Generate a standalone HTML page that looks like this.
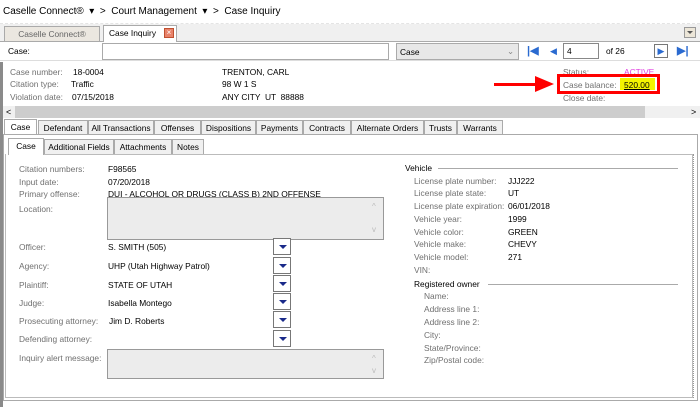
<!DOCTYPE html>
<html><head><style>
*{margin:0;padding:0;box-sizing:border-box}
body{width:700px;height:407px;background:#fff;font-family:"Liberation Sans",sans-serif;font-size:8.4px;color:#000;position:relative;overflow:hidden}
.a{position:absolute;white-space:nowrap}
.g{color:#707070}
.tab{position:absolute;border:1px solid #aaa;border-bottom:none;background:#f0f0f0;font-size:8.4px;padding-top:2px;text-align:center}
.dd{position:absolute;width:18px;height:17px;border:1px solid #777;background:#fff}
.dd:after{content:"";position:absolute;left:5px;top:6px;border-left:4px solid transparent;border-right:4px solid transparent;border-top:4px solid #1a2a8a}
.box{position:absolute;border:1px solid #999;background:#ececec}
</style></head><body>
<div class="a" style="left:0;top:0;width:700px;height:24px;background:#fff;border-bottom:1px dashed #e4e4e4"></div>
<div class="a" style="left:3px;top:6px;font-size:10px">Caselle Connect® &nbsp;▾ &nbsp;&gt; &nbsp;Court Management &nbsp;▾ &nbsp;&gt; &nbsp;Case Inquiry</div>
<div class="a" style="left:0;top:24px;width:700px;height:18px;background:#f0f0f0;border-bottom:1px solid #aaa"></div>
<div class="tab" style="left:4px;top:26px;width:96px;height:15px;color:#666;background:#ebe7e0">Caselle Connect®</div>
<div class="tab" style="left:103px;top:25px;width:74px;height:17px;background:#fff;text-align:left;padding-left:5px">Case Inquiry</div>
<div class="a" style="left:164px;top:28px;width:10px;height:10px;background:#e8826a;border:1px solid #c05030;color:#fff;font-size:8px;line-height:8px;text-align:center">×</div>
<div class="a" style="left:684px;top:27px;width:12px;height:11px;border:1px solid #999;background:#ece6d8"></div>
<div class="a" style="left:687px;top:31px;border-left:3px solid transparent;border-right:3px solid transparent;border-top:3px solid #555"></div>
<div class="a" style="left:0;top:42px;width:700px;height:19px;border-bottom:1px solid #ddd"></div>
<div class="a" style="left:8px;top:46px">Case:</div>
<div class="a" style="left:102px;top:43px;width:287px;height:17px;border:1px solid #aaa"></div>
<div class="a" style="left:396px;top:43px;width:123px;height:17px;border:1px solid #aaa;background:#e8e8e8;padding:3px 3px">Case<span style="position:absolute;right:4px;top:2px;color:#888">⌄</span></div>
<div class="a" style="left:527px;top:46px;color:#2a6ad0;font-size:11px;line-height:11px;font-weight:bold">|◀</div>
<div class="a" style="left:550px;top:46px;color:#2a6ad0;font-size:9px;line-height:11px">◀</div>
<div class="a" style="left:563px;top:43px;width:36px;height:16px;border:1px solid #888;padding:2px 3px">4</div>
<div class="a" style="left:606px;top:46px">of 26</div>
<div class="a" style="left:654px;top:44px;width:14px;height:14px;border:1px solid #777;color:#2a6ad0;font-size:9px;line-height:12px;text-align:center">▶</div>
<div class="a" style="left:677px;top:46px;color:#2a6ad0;font-size:11px;line-height:11px;font-weight:bold">▶|</div>
<div class="a" style="left:0;top:62px;width:3px;height:345px;background:#8a8a8a"></div>
<div class="a g" style="left:10px;top:67px">Case number:</div><div class="a" style="left:73px;top:67px">18-0004</div>
<div class="a g" style="left:10px;top:79px">Citation type:</div><div class="a" style="left:71px;top:79px">Traffic</div>
<div class="a g" style="left:10px;top:92px">Violation date:</div><div class="a" style="left:72px;top:92px">07/15/2018</div>
<div class="a" style="left:222px;top:67px">TRENTON, CARL</div>
<div class="a" style="left:222px;top:79px">98 W 1 S</div>
<div class="a" style="left:222px;top:92px">ANY CITY &nbsp;UT &nbsp;88888</div>
<div class="a g" style="left:563px;top:67px">Status:</div>
<div class="a" style="left:624px;top:67px;color:#e040e0">ACTIVE</div>
<div class="a g" style="left:563px;top:80px">Case balance:</div>
<div class="a" style="left:620px;top:78px;width:35px;height:12px;background:#f4f400"></div>
<div class="a" style="left:624px;top:80px;text-decoration:underline">520.00</div>
<div class="a g" style="left:563px;top:93px">Close date:</div>
<div class="a" style="left:557px;top:74px;width:103px;height:20px;border:3px solid #f00"></div>
<div class="a" style="left:494px;top:83px;width:45px;height:3px;background:#f00"></div>
<div class="a" style="left:535px;top:76px;border-top:8px solid transparent;border-bottom:8px solid transparent;border-left:19px solid #f00"></div>
<div class="a" style="left:3px;top:106px;width:697px;height:12px;background:#f0f0f0"></div>
<div class="a" style="left:15px;top:106px;width:280px;height:12px;background:#cdcdcd"></div>
<div class="a" style="left:295px;top:106px;width:350px;height:12px;background:#cdcdcd"></div>
<div class="a" style="left:6px;top:107px;font-size:9px">&lt;</div>
<div class="a" style="left:691px;top:107px;font-size:9px">&gt;</div>
<div class="tab" style="left:4px;top:119px;width:33px;height:16px;background:#fff;border-color:#aaa">Case</div>
<div class="tab" style="left:38px;top:120px;width:50px;height:14px">Defendant</div>
<div class="tab" style="left:88px;top:120px;width:66px;height:14px">All Transactions</div>
<div class="tab" style="left:154px;top:120px;width:47px;height:14px">Offenses</div>
<div class="tab" style="left:201px;top:120px;width:55px;height:14px">Dispositions</div>
<div class="tab" style="left:256px;top:120px;width:47px;height:14px">Payments</div>
<div class="tab" style="left:303px;top:120px;width:48px;height:14px">Contracts</div>
<div class="tab" style="left:351px;top:120px;width:73px;height:14px">Alternate Orders</div>
<div class="tab" style="left:424px;top:120px;width:33px;height:14px">Trusts</div>
<div class="tab" style="left:457px;top:120px;width:46px;height:14px">Warrants</div>
<div class="a" style="left:3px;top:134px;width:695px;height:267px;border:1px solid #aaa;border-top:1px solid #aaa"></div>
<div class="a" style="left:37px;top:134px;width:661px;height:1px;background:#aaa"></div>
<div class="tab" style="left:8px;top:138px;width:36px;height:17px;background:#fff">Case</div>
<div class="tab" style="left:44px;top:139px;width:70px;height:15px">Additional Fields</div>
<div class="tab" style="left:114px;top:139px;width:58px;height:15px">Attachments</div>
<div class="tab" style="left:172px;top:139px;width:32px;height:15px">Notes</div>
<div class="a" style="left:5px;top:154px;width:688px;height:244px;border:1px solid #bbb;border-top:none"></div>
<div class="a" style="left:44px;top:154px;width:649px;height:1px;background:#bbb"></div>
<div class="a" style="left:693px;top:154px;width:1px;height:244px;border-left:1px dotted #999"></div>
<div class="a g" style="left:19px;top:164px">Citation numbers:</div><div class="a" style="left:108px;top:164px">F98565</div>
<div class="a g" style="left:19px;top:177px">Input date:</div><div class="a" style="left:108px;top:177px">07/20/2018</div>
<div class="a g" style="left:19px;top:189px">Primary offense:</div><div class="a" style="left:108px;top:189px">DUI - ALCOHOL OR DRUGS (CLASS B) 2ND OFFENSE</div>
<div class="a g" style="left:19px;top:204px">Location:</div>
<div class="box" style="left:107px;top:197px;width:277px;height:43px"></div>
<div class="a" style="left:372px;top:202px;color:#bbb;font-size:8px">^</div>
<div class="a" style="left:372px;top:225px;color:#bbb;font-size:8px">v</div>
<div class="a g" style="left:19px;top:242px">Officer:</div><div class="a" style="left:108px;top:242px">S. SMITH (505)</div><div class="dd" style="left:273px;top:238px"></div>
<div class="a g" style="left:19px;top:261px">Agency:</div><div class="a" style="left:108px;top:261px">UHP (Utah Highway Patrol)</div><div class="dd" style="left:273px;top:257px"></div>
<div class="a g" style="left:19px;top:280px">Plaintiff:</div><div class="a" style="left:108px;top:280px">STATE OF UTAH</div><div class="dd" style="left:273px;top:275px"></div>
<div class="a g" style="left:19px;top:298px">Judge:</div><div class="a" style="left:108px;top:298px">Isabella Montego</div><div class="dd" style="left:273px;top:293px"></div>
<div class="a g" style="left:19px;top:316px">Prosecuting attorney:</div><div class="a" style="left:109px;top:316px">Jim D. Roberts</div><div class="dd" style="left:273px;top:311px"></div>
<div class="a g" style="left:19px;top:334px">Defending attorney:</div><div class="dd" style="left:273px;top:330px;"></div>
<div class="a g" style="left:19px;top:353px">Inquiry alert message:</div>
<div class="box" style="left:107px;top:349px;width:277px;height:30px"></div>
<div class="a" style="left:372px;top:354px;color:#bbb;font-size:8px">^</div>
<div class="a" style="left:372px;top:366px;color:#bbb;font-size:8px">v</div>
<div class="a" style="left:405px;top:163px">Vehicle</div>
<div class="a" style="left:438px;top:168px;width:240px;height:1px;background:#aaa"></div>
<div class="a g" style="left:414px;top:176px">License plate number:</div><div class="a" style="left:508px;top:176px">JJJ222</div>
<div class="a g" style="left:414px;top:188px">License plate state:</div><div class="a" style="left:508px;top:188px">UT</div>
<div class="a g" style="left:414px;top:201px">License plate expiration:</div><div class="a" style="left:508px;top:201px">06/01/2018</div>
<div class="a g" style="left:414px;top:214px">Vehicle year:</div><div class="a" style="left:508px;top:214px">1999</div>
<div class="a g" style="left:414px;top:227px">Vehicle color:</div><div class="a" style="left:508px;top:227px">GREEN</div>
<div class="a g" style="left:414px;top:239px">Vehicle make:</div><div class="a" style="left:508px;top:239px">CHEVY</div>
<div class="a g" style="left:414px;top:252px">Vehicle model:</div><div class="a" style="left:508px;top:252px">271</div>
<div class="a g" style="left:414px;top:265px">VIN:</div>
<div class="a" style="left:414px;top:279px">Registered owner</div>
<div class="a" style="left:488px;top:284px;width:190px;height:1px;background:#aaa"></div>
<div class="a g" style="left:424px;top:291px">Name:</div>
<div class="a g" style="left:424px;top:304px">Address line 1:</div>
<div class="a g" style="left:424px;top:317px">Address line 2:</div>
<div class="a g" style="left:424px;top:330px">City:</div>
<div class="a g" style="left:424px;top:343px">State/Province:</div>
<div class="a g" style="left:424px;top:355px">Zip/Postal code:</div>
</body></html>
